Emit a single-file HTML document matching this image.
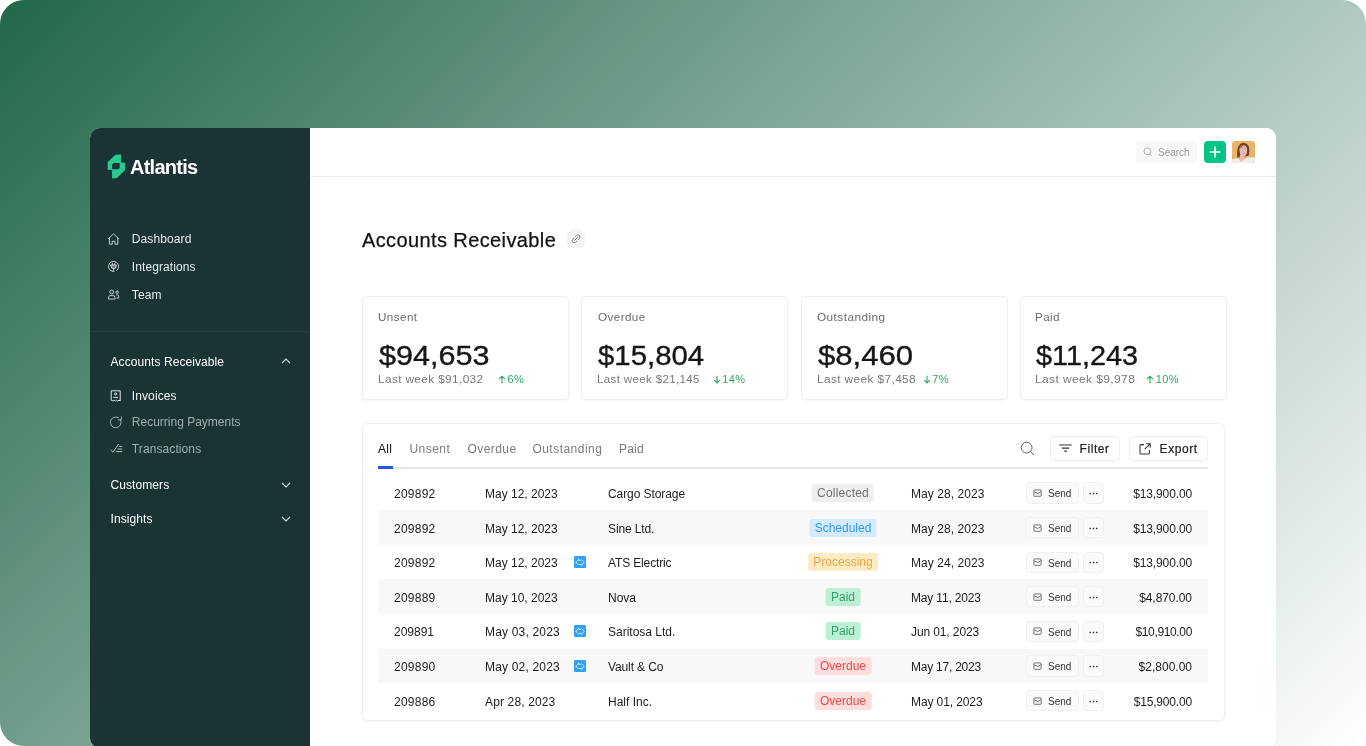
<!DOCTYPE html>
<html lang="en">
<head>
<meta charset="utf-8">
<title>Atlantis – Accounts Receivable</title>
<style>
*{box-sizing:border-box;margin:0;padding:0}
html,body{width:1366px;height:746px;overflow:hidden;background:#fff;font-family:"Liberation Sans",sans-serif;}
.abs{position:absolute}
#stage{position:absolute;left:0;top:0;width:1366px;height:746px;border-radius:24px;overflow:hidden;
  background:linear-gradient(135deg,#22674b 0%,#ffffff 100%);}
#app{will-change:transform;position:absolute;left:90px;top:128px;width:1186px;height:619.6px;border-radius:10px;background:#fff;overflow:hidden}
#side{position:absolute;left:0;top:0;width:220px;height:622px;background:#1a3335;color:#fff}
#side .divider{position:absolute;left:0;top:203px;width:220px;height:1px;background:#27413f}
.nav{position:absolute;left:41.8px;font-size:12px;color:#e6ebeb;white-space:nowrap;line-height:14px;letter-spacing:.1px}
.nav.dim{color:#9fb0b0}
.grp{position:absolute;left:20.5px;font-size:12px;color:#fff;white-space:nowrap;line-height:14px;letter-spacing:.08px;margin-top:.5px}
.ico{position:absolute}
#main{position:absolute;left:220px;top:0;width:966px;height:640px;background:#fff}
#topbar{position:absolute;left:0;top:0;width:966px;height:49px;border-bottom:1px solid #ededed}
#search{position:absolute;left:826px;top:13px;width:61px;height:22px;border-radius:3px;background:#f8f8f8;font-size:10px;color:#9a9a9a;line-height:22px}
#plus{position:absolute;left:894px;top:13px;width:22px;height:22px;border-radius:4px;background:#04c487}
#avatar{position:absolute;left:922px;top:13px;width:23px;height:22px;border-radius:4px;background:#e6a95d;overflow:hidden}
h1{position:absolute;left:52px;top:99.5px;font-size:20px;font-weight:400;color:#111;line-height:24px;white-space:nowrap;letter-spacing:.39px;-webkit-text-stroke:.25px #111}
#link{position:absolute;left:257px;top:102px;width:18px;height:18px;border-radius:5.5px;background:#f4f4f4}
.card{position:absolute;top:168px;width:207px;height:104px;border:1px solid #eeeeee;border-radius:5px;background:#fff;box-shadow:0 1px 2px rgba(0,0,0,.045)}
.card.c4>div{margin-left:-.75px}
.card .lbl{position:absolute;left:15.3px;top:13.1px;font-size:11px;color:#6b6b6b;line-height:14px;letter-spacing:.4px;white-space:nowrap;transform-origin:0 50%;transform:scaleX(1.06)}
.card .big{position:absolute;left:16px;top:42.1px;font-size:28px;color:#161616;line-height:34px;white-space:nowrap;transform-origin:0 50%;transform:scaleX(1.1);-webkit-text-stroke:.35px #161616}
.card .sub{position:absolute;left:15px;top:74.7px;font-size:11px;color:#777;line-height:14px;letter-spacing:.35px;white-space:nowrap;transform-origin:0 50%;transform:scaleX(1.05)}
.card .chg{position:absolute;top:74.7px;font-size:11px;color:#2fa562;line-height:14px;white-space:nowrap;letter-spacing:.4px}
#tblframe{position:absolute;left:52px;top:295px;width:863px;height:298.2px;border:1px solid #efefef;border-radius:5.5px;background:#fff;box-shadow:0 1px 2px rgba(0,0,0,.045)}
#tbl{position:absolute;left:53px;top:297px;width:861px;height:296px}
.tab{position:absolute;top:17px;font-size:12px;line-height:14px;color:#7b7b7b;white-space:nowrap;letter-spacing:.48px}
.tab.on{color:#111}
#tline{position:absolute;left:15px;top:41.6px;width:830px;height:2.2px;background:#e7e7e7}
#tactive{position:absolute;left:15px;top:40.6px;width:15px;height:3.7px;background:#2a54e8}
.btn{position:absolute;top:11.4px;height:24.3px;border:1px solid #ececec;border-radius:4.5px;background:#fff;font-size:12px;line-height:22.3px;color:#222;white-space:nowrap;letter-spacing:.55px;-webkit-text-stroke:.22px #222}
.row{position:absolute;left:15px;width:830px;height:34.62px;font-size:12px;color:#1c1c1c}
.row.alt{background:#f8f8f8}
.row span{position:absolute;top:1.4px;line-height:35px;white-space:nowrap}
.row .id{left:16px}
.row .d1{left:107px}
.row .nm{left:230px}
.row .d2{left:533px}
.row .amt{right:16px;text-align:right}
.row .bdg{top:8.4px;height:18px;line-height:18px;border-radius:3px;font-size:12px;text-align:center;transform:translateX(-50%);left:465px;padding:0 5.3px;letter-spacing:0}
.b-col{background:#efefef;color:#707070}
.b-sch{background:#d5ebfb;color:#2d9cf0}
.b-pro{background:#fdecc3;color:#eba64a}
.b-paid{background:#bdefd7;color:#2fa562}
.b-ovd{background:#fddddd;color:#e84b4b}
.row .send{left:648px;top:6.8px;width:52.6px;height:21.2px;border:1px solid #f0f0f0;background:#fafafa;border-radius:4px;font-size:10px;line-height:19px;color:#333}
.row .more{left:704.8px;top:6.8px;width:21.2px;height:21.2px;border:1px solid #f0f0f0;background:#fafafa;border-radius:4px}
.row .sync{left:196px;top:11.2px;width:12px;height:12px;background:#2fa3f3;border-radius:1.2px}
.row .sync svg{position:absolute;left:0;top:0}
</style>
</head>
<body>
<div id="stage">
 <div id="app">
  <div id="side">
   <svg class="ico" id="logo" style="left:17px;top:25.5px" width="19" height="25" viewBox="0 0 19 25">
    <path fill="#27cb8f" d="M14.1 0.4 L8.3 0.8 L0.65 8.2 L0.65 15.7 L5.1 16.1 L5.1 24.5 L9.9 24.1 L18.1 16.1 L18.1 8.8 L14.1 8.4 Z"/>
    <path fill="#1a3335" d="M5.1 10.5 L6.3 9.1 L12.7 9.1 L12.7 13.7 L11.5 15.3 L5.1 15.3 Z"/>
   </svg>
   <div class="abs" id="brand" style="left:40px;top:27px;font-size:20px;font-weight:700;line-height:24px;letter-spacing:-.75px;color:#fff">Atlantis</div>

   <svg class="ico" style="left:18px;top:104.5px" width="12" height="12" viewBox="0 0 12 12" fill="none" stroke="#dfe6e6" stroke-width=".85" stroke-linejoin="round" stroke-linecap="round"><path d="M0.4 5.8 L5.5 0.8 L10.7 5.8"/><path d="M1.4 5 V11.2 H4.2 V8.3 H7 V11.2 H9.8 V5"/></svg>
   <div class="nav" style="top:104px">Dashboard</div>
   <svg class="ico" style="left:18px;top:133px" width="12" height="12" viewBox="0 0 12 12" fill="none" stroke="#dfe6e6" stroke-width=".85" stroke-linecap="round"><path d="M8.88 9.41 A5.1 5.1 0 1 0 6.04 10.58"/><path d="M3 3.9 H8.2 V5.4 Q8.2 7.6 5.6 7.6 Q3 7.6 3 5.4 Z" fill="#dfe6e6" fill-opacity=".4"/><path d="M4.4 2.3 V3.9 M6.8 2.3 V3.9 M5.6 7.6 V9.6"/></svg>
   <div class="nav" style="top:132px">Integrations</div>
   <svg class="ico" style="left:18px;top:161px" width="12" height="11" viewBox="0 0 12 11" fill="none" stroke="#dfe6e6" stroke-width=".85"><circle cx="3.7" cy="3" r="1.9"/><path d="M0.6 10.1 V8.7 Q0.6 6.4 2.8 6.4 H4.8 Q7 6.4 7 8.7 V10.1 Z"/><circle cx="9.1" cy="3.2" r="1.25"/><path d="M8.2 5.9 H9.5 Q10.7 5.9 10.7 7.4 V9.1 H8.6"/></svg>
   <div class="nav" style="top:160px">Team</div>

   <div class="divider"></div>

   <div class="grp" style="top:226px">Accounts Receivable</div>
   <svg class="ico" style="left:191px;top:230px" width="10" height="6" viewBox="0 0 10 6" fill="none" stroke="#cfd8d8" stroke-width="1.1"><path d="M1 5 L5 1 L9 5"/></svg>

   <svg class="ico" style="left:20px;top:262px" width="12" height="12" viewBox="0 0 12 12" fill="none" stroke="#dfe6e6" stroke-width="1"><path d="M1.2 0.8 H10.2 V11 L9 10.2 L7.8 11 L6.6 10.2 L5.4 11 L4.2 10.2 L3 11 L1.2 10.2 Z"/><circle cx="5.7" cy="4" r="1.1"/><path d="M3.4 7.4 H8"/></svg>
   <div class="nav" style="top:261px;color:#f2f5f5">Invoices</div>
   <svg class="ico" style="left:19px;top:288px" width="14" height="13" viewBox="0 0 14 13" fill="none" stroke="#aebcbc" stroke-width=".95" stroke-linecap="round" stroke-linejoin="round"><path d="M11.7 4.2 A5.4 5.4 0 1 1 9.4 1.62"/><path d="M9.3 3.9 H12.3 V0.9"/></svg>
   <div class="nav dim" style="top:287px;letter-spacing:0">Recurring Payments</div>
   <svg class="ico" style="left:19.5px;top:314.5px" width="13" height="11" viewBox="0 0 13 11" fill="none" stroke="#aebcbc" stroke-width="1"><path d="M0.6 6.9 L3 9.2 L8.6 1 M9.2 3.4 H12.2 M7.6 6 H12.2 M5.8 8.6 H12.2"/></svg>
   <div class="nav dim" style="top:314px">Transactions</div>

   <div class="grp" style="top:349px">Customers</div>
   <svg class="ico" style="left:191px;top:353.5px" width="10" height="6" viewBox="0 0 10 6" fill="none" stroke="#cfd8d8" stroke-width="1.1"><path d="M1 1 L5 5 L9 1"/></svg>
   <div class="grp" style="top:383.4px">Insights</div>
   <svg class="ico" style="left:191px;top:388px" width="10" height="6" viewBox="0 0 10 6" fill="none" stroke="#cfd8d8" stroke-width="1.1"><path d="M1 1 L5 5 L9 1"/></svg>
  </div>
  <div id="main">
   <div id="topbar">
    <div id="search"><svg class="abs" style="left:7px;top:6px" width="10" height="10" viewBox="0 0 10 10" fill="none" stroke="#b5b5b5" stroke-width="1"><circle cx="4.4" cy="4.4" r="3.4"/><path d="M7 7 L8.8 8.8"/></svg><span class="abs" style="left:22px;top:.6px">Search</span></div>
    <div id="plus"><svg class="abs" style="left:5px;top:5px" width="12" height="12" viewBox="0 0 12 12" stroke="#fff" stroke-width="1.6" fill="none"><path d="M6 0.5 V11.5 M0.5 6 H11.5"/></svg></div>
    <div id="avatar"><svg width="23" height="22" viewBox="0 0 23 22">
      <rect width="23" height="22" fill="#e9b368"/>
      <path d="M5.3 16.2 Q4.8 10 5.8 6.6 Q7.4 1.8 11.6 1.9 Q15.8 2 17 6.2 Q17.8 9.6 16.8 14.4 L13.4 15.6 L7.6 16.6 Z" fill="#6a4327"/>
      <path d="M7.4 9.6 Q7.2 4.6 11 4.3 Q15 4.1 15.2 8.8 Q15.3 12.6 13.6 14.6 Q11.6 16.4 9.6 15 Q7.6 13.2 7.4 9.6 Z" fill="#f3b7b0"/>
      <path d="M8 13.4 L12.4 15 L12.2 18.6 L10.4 21 L7.2 20.6 Z" fill="#f3b7b0"/>
      <path d="M7.6 7.6 Q8.6 4.6 11.4 4.3 Q10.4 6 7.6 7.6Z" fill="#6a4327"/>
      <circle cx="10.1" cy="7.3" r=".55" fill="#73808f"/><circle cx="13.1" cy="7.4" r=".55" fill="#73808f"/>
      <ellipse cx="12" cy="12.1" rx="1.1" ry=".55" fill="#8f9eae"/>
      <path d="M10.4 10 L11.2 9.4 L11.6 10.4Z" fill="#e59a86"/>
      <path d="M0 22.3 V18.4 Q3.6 17.2 7 17.8 L8.4 20.8 L12.2 18.8 L14.4 16.8 Q18.6 15.8 23 16.4 V22.3 Z" fill="#eef0ef"/>
    </svg></div>
   </div>
   <h1>Accounts Receivable</h1>
   <div id="link"><svg class="abs" style="left:0;top:0" width="18" height="18" viewBox="0 0 18 18" fill="none" stroke="#767676" stroke-width=".85" stroke-linecap="round"><g transform="translate(9.1 8.9) rotate(-45)"><path d="M-1 -2 H-2.7 A2 2 0 0 0 -2.7 2 H-1"/><path d="M1 -2 H2.7 A2 2 0 0 1 2.7 2 H1"/><path d="M-1.9 0 H1.9"/></g></svg></div>
   <div class="card" style="left:52px">
    <div class="lbl" style="transform:scaleX(1.06)">Unsent</div>
    <div class="big" style="transform:scaleX(1.092)">$94,653</div>
    <div class="sub" style="transform:scaleX(1.0727)">Last week $91,032</div>
    <div class="chg" style="left:135.2px"><svg class="abs" style="left:0;top:3px" width="8" height="9" viewBox="0 0 8 9" fill="none" stroke="#2fa562" stroke-width="1.1"><path d="M4 8.5 V1.2 M1.2 4 L4 1.2 L6.8 4"/></svg><span style="margin-left:9.4px">6%</span></div>
   </div>
   <div class="card" style="left:271.25px">
    <div class="lbl" style="transform:scaleX(1.06)">Overdue</div>
    <div class="big" style="transform:scaleX(1.049)">$15,804</div>
    <div class="sub" style="transform:scaleX(1.046)">Last week $21,145</div>
    <div class="chg" style="left:130.55px"><svg class="abs" style="left:0;top:3px" width="8" height="9" viewBox="0 0 8 9" fill="none" stroke="#2fa562" stroke-width="1.1"><path d="M4 0.8 V8 M1.2 5.2 L4 8 L6.8 5.2"/></svg><span style="margin-left:9.4px">14%</span></div>
   </div>
   <div class="card" style="left:490.5px">
    <div class="lbl" style="transform:scaleX(1.074)">Outstanding</div>
    <div class="big" style="transform:scaleX(1.111)">$8,460</div>
    <div class="sub" style="transform:scaleX(1.079)">Last week $7,458</div>
    <div class="chg" style="left:121.25px"><svg class="abs" style="left:0;top:3px" width="8" height="9" viewBox="0 0 8 9" fill="none" stroke="#2fa562" stroke-width="1.1"><path d="M4 0.8 V8 M1.2 5.2 L4 8 L6.8 5.2"/></svg><span style="margin-left:9.4px">7%</span></div>
   </div>
   <div class="card c4" style="left:709.75px">
    <div class="lbl" style="transform:scaleX(1.06)">Paid</div>
    <div class="big" style="transform:scaleX(1.029)">$11,243</div>
    <div class="sub" style="transform:scaleX(1.091)">Last week $9,978</div>
    <div class="chg" style="left:126.45px"><svg class="abs" style="left:0;top:3px" width="8" height="9" viewBox="0 0 8 9" fill="none" stroke="#2fa562" stroke-width="1.1"><path d="M4 8.5 V1.2 M1.2 4 L4 1.2 L6.8 4"/></svg><span style="margin-left:9.4px">10%</span></div>
   </div>
   <div id="tblframe"></div>
   <div id="tbl">
    <div class="tab on" style="left:15px;letter-spacing:.3px">All</div>
    <div class="tab" style="left:46.4px">Unsent</div>
    <div class="tab" style="left:104.6px;letter-spacing:.42px">Overdue</div>
    <div class="tab" style="left:169.4px">Outstanding</div>
    <div class="tab" style="left:256px;letter-spacing:.2px">Paid</div>
    <svg class="abs" style="left:656.6px;top:15.8px" width="15" height="15" viewBox="0 0 15 15" fill="none" stroke="#5e5e5e" stroke-width="1"><circle cx="6.6" cy="6.6" r="5.4"/><path d="M10.6 10.6 L14 14"/></svg>
    <div class="btn" style="left:687px;width:70.3px"><svg class="abs" style="left:8px;top:6.9px" width="13" height="9" viewBox="0 0 13 9" fill="none" stroke="#333" stroke-width="1.05"><path d="M0.2 1 H12.8 M2.8 4.1 H10.2 M5.2 7.1 H7.9"/></svg><span class="abs" style="left:28.6px;top:.8px">Filter</span></div>
    <div class="btn" style="left:766.3px;width:78.7px"><svg class="abs" style="left:8.6px;top:5.6px" width="12" height="12" viewBox="0 0 12 12" fill="none" stroke="#333" stroke-width="1.05"><path d="M5 1.6 H2 Q1 1.6 1 2.6 V10 Q1 11 2 11 H9.4 Q10.4 11 10.4 10 V7"/><path d="M7.2 0.8 H11.2 V4.8 M11.2 0.8 L5.8 6.2"/></svg><span class="abs" style="left:29.3px;top:.8px">Export</span></div>
    <div id="tline"></div><div id="tactive"></div>
    <div class="row" style="top:50.60px"><span class="id" style="letter-spacing:0.24px">209892</span><span class="d1">May 12, 2023</span><span class="nm" style="letter-spacing:-0.08px">Cargo Storage</span><span class="bdg b-col" style="letter-spacing:.2px">Collected</span><span class="d2" style="letter-spacing:0.07px">May 28, 2023</span><span class="send"><svg class="abs" style="left:6px;top:5.6px" width="10" height="9" viewBox="0 0 10 9" fill="none" stroke="#555" stroke-width="0.8"><rect x="0.9" y="0.9" width="7.2" height="6.4" rx="0.7"/><path d="M1.1 2.7 L4.5 4.5 L7.9 2.7"/></svg><span class="abs" style="left:21px;top:1px;line-height:19px">Send</span></span><span class="more"><svg class="abs" style="left:5px;top:8.7px" width="9" height="3" viewBox="0 0 9 3" fill="#444"><rect x=".4" y=".7" width="1.6" height="1.6" rx=".4"/><rect x="3.7" y=".7" width="1.6" height="1.6" rx=".4"/><rect x="7" y=".7" width="1.6" height="1.6" rx=".4"/></svg></span><span class="amt" style="letter-spacing:-0.13px">$13,900.00</span></div>
    <div class="row alt" style="top:85.22px"><span class="id" style="letter-spacing:0.24px">209892</span><span class="d1">May 12, 2023</span><span class="nm" style="letter-spacing:-0.12px">Sine Ltd.</span><span class="bdg b-sch">Scheduled</span><span class="d2" style="letter-spacing:0.07px">May 28, 2023</span><span class="send"><svg class="abs" style="left:6px;top:5.6px" width="10" height="9" viewBox="0 0 10 9" fill="none" stroke="#555" stroke-width="0.8"><rect x="0.9" y="0.9" width="7.2" height="6.4" rx="0.7"/><path d="M1.1 2.7 L4.5 4.5 L7.9 2.7"/></svg><span class="abs" style="left:21px;top:1px;line-height:19px">Send</span></span><span class="more"><svg class="abs" style="left:5px;top:8.7px" width="9" height="3" viewBox="0 0 9 3" fill="#444"><rect x=".4" y=".7" width="1.6" height="1.6" rx=".4"/><rect x="3.7" y=".7" width="1.6" height="1.6" rx=".4"/><rect x="7" y=".7" width="1.6" height="1.6" rx=".4"/></svg></span><span class="amt" style="letter-spacing:-0.13px">$13,900.00</span></div>
    <div class="row" style="top:119.84px"><span class="id" style="letter-spacing:0.24px">209892</span><span class="d1">May 12, 2023</span><span class="sync"><svg width="12" height="12" viewBox="0 0 12 12" fill="none" stroke="#d9eefd" stroke-width="0.75" stroke-linecap="round" stroke-linejoin="round"><path d="M2.1 6.3 Q2.6 4.2 4.5 4.1 H7.7 Q9.6 4.4 10 6.3 Q9.6 8.4 7.7 8.6 H4.5 Q2.5 8.4 2.1 6.3Z"/><path d="M4.4 3 L4.5 4.1 L5.6 4.5 M7.9 9.6 L7.7 8.6 L6.6 8.2"/></svg></span><span class="nm" style="letter-spacing:-0.14px">ATS Electric</span><span class="bdg b-pro">Processing</span><span class="d2" style="letter-spacing:0.07px">May 24, 2023</span><span class="send"><svg class="abs" style="left:6px;top:5.6px" width="10" height="9" viewBox="0 0 10 9" fill="none" stroke="#555" stroke-width="0.8"><rect x="0.9" y="0.9" width="7.2" height="6.4" rx="0.7"/><path d="M1.1 2.7 L4.5 4.5 L7.9 2.7"/></svg><span class="abs" style="left:21px;top:1px;line-height:19px">Send</span></span><span class="more"><svg class="abs" style="left:5px;top:8.7px" width="9" height="3" viewBox="0 0 9 3" fill="#444"><rect x=".4" y=".7" width="1.6" height="1.6" rx=".4"/><rect x="3.7" y=".7" width="1.6" height="1.6" rx=".4"/><rect x="7" y=".7" width="1.6" height="1.6" rx=".4"/></svg></span><span class="amt" style="letter-spacing:-0.13px">$13,900.00</span></div>
    <div class="row alt" style="top:154.46px"><span class="id" style="letter-spacing:0.24px">209889</span><span class="d1">May 10, 2023</span><span class="nm">Nova</span><span class="bdg b-paid">Paid</span><span class="d2" style="letter-spacing:-0.17px">May 11, 2023</span><span class="send"><svg class="abs" style="left:6px;top:5.6px" width="10" height="9" viewBox="0 0 10 9" fill="none" stroke="#555" stroke-width="0.8"><rect x="0.9" y="0.9" width="7.2" height="6.4" rx="0.7"/><path d="M1.1 2.7 L4.5 4.5 L7.9 2.7"/></svg><span class="abs" style="left:21px;top:1px;line-height:19px">Send</span></span><span class="more"><svg class="abs" style="left:5px;top:8.7px" width="9" height="3" viewBox="0 0 9 3" fill="#444"><rect x=".4" y=".7" width="1.6" height="1.6" rx=".4"/><rect x="3.7" y=".7" width="1.6" height="1.6" rx=".4"/><rect x="7" y=".7" width="1.6" height="1.6" rx=".4"/></svg></span><span class="amt" style="letter-spacing:-0.06px">$4,870.00</span></div>
    <div class="row" style="top:189.08px"><span class="id">209891</span><span class="d1" style="letter-spacing:0.18px">May 03, 2023</span><span class="sync"><svg width="12" height="12" viewBox="0 0 12 12" fill="none" stroke="#d9eefd" stroke-width="0.75" stroke-linecap="round" stroke-linejoin="round"><path d="M2.1 6.3 Q2.6 4.2 4.5 4.1 H7.7 Q9.6 4.4 10 6.3 Q9.6 8.4 7.7 8.6 H4.5 Q2.5 8.4 2.1 6.3Z"/><path d="M4.4 3 L4.5 4.1 L5.6 4.5 M7.9 9.6 L7.7 8.6 L6.6 8.2"/></svg></span><span class="nm">Saritosa Ltd.</span><span class="bdg b-paid">Paid</span><span class="d2" style="letter-spacing:-0.11px">Jun 01, 2023</span><span class="send"><svg class="abs" style="left:6px;top:5.6px" width="10" height="9" viewBox="0 0 10 9" fill="none" stroke="#555" stroke-width="0.8"><rect x="0.9" y="0.9" width="7.2" height="6.4" rx="0.7"/><path d="M1.1 2.7 L4.5 4.5 L7.9 2.7"/></svg><span class="abs" style="left:21px;top:1px;line-height:19px">Send</span></span><span class="more"><svg class="abs" style="left:5px;top:8.7px" width="9" height="3" viewBox="0 0 9 3" fill="#444"><rect x=".4" y=".7" width="1.6" height="1.6" rx=".4"/><rect x="3.7" y=".7" width="1.6" height="1.6" rx=".4"/><rect x="7" y=".7" width="1.6" height="1.6" rx=".4"/></svg></span><span class="amt" style="letter-spacing:-0.35px">$10,910.00</span></div>
    <div class="row alt" style="top:223.70px"><span class="id" style="letter-spacing:0.24px">209890</span><span class="d1" style="letter-spacing:0.18px">May 02, 2023</span><span class="sync"><svg width="12" height="12" viewBox="0 0 12 12" fill="none" stroke="#d9eefd" stroke-width="0.75" stroke-linecap="round" stroke-linejoin="round"><path d="M2.1 6.3 Q2.6 4.2 4.5 4.1 H7.7 Q9.6 4.4 10 6.3 Q9.6 8.4 7.7 8.6 H4.5 Q2.5 8.4 2.1 6.3Z"/><path d="M4.4 3 L4.5 4.1 L5.6 4.5 M7.9 9.6 L7.7 8.6 L6.6 8.2"/></svg></span><span class="nm" style="letter-spacing:-0.12px">Vault &amp; Co</span><span class="bdg b-ovd">Overdue</span><span class="d2" style="letter-spacing:-0.23px">May 17, 2023</span><span class="send"><svg class="abs" style="left:6px;top:5.6px" width="10" height="9" viewBox="0 0 10 9" fill="none" stroke="#555" stroke-width="0.8"><rect x="0.9" y="0.9" width="7.2" height="6.4" rx="0.7"/><path d="M1.1 2.7 L4.5 4.5 L7.9 2.7"/></svg><span class="abs" style="left:21px;top:1px;line-height:19px">Send</span></span><span class="more"><svg class="abs" style="left:5px;top:8.7px" width="9" height="3" viewBox="0 0 9 3" fill="#444"><rect x=".4" y=".7" width="1.6" height="1.6" rx=".4"/><rect x="3.7" y=".7" width="1.6" height="1.6" rx=".4"/><rect x="7" y=".7" width="1.6" height="1.6" rx=".4"/></svg></span><span class="amt">$2,800.00</span></div>
    <div class="row" style="top:258.32px"><span class="id" style="letter-spacing:0.24px">209886</span><span class="d1" style="letter-spacing:.14px">Apr 28, 2023</span><span class="nm">Half Inc.</span><span class="bdg b-ovd">Overdue</span><span class="d2" style="letter-spacing:-0.1px">May 01, 2023</span><span class="send"><svg class="abs" style="left:6px;top:5.6px" width="10" height="9" viewBox="0 0 10 9" fill="none" stroke="#555" stroke-width="0.8"><rect x="0.9" y="0.9" width="7.2" height="6.4" rx="0.7"/><path d="M1.1 2.7 L4.5 4.5 L7.9 2.7"/></svg><span class="abs" style="left:21px;top:1px;line-height:19px">Send</span></span><span class="more"><svg class="abs" style="left:5px;top:8.7px" width="9" height="3" viewBox="0 0 9 3" fill="#444"><rect x=".4" y=".7" width="1.6" height="1.6" rx=".4"/><rect x="3.7" y=".7" width="1.6" height="1.6" rx=".4"/><rect x="7" y=".7" width="1.6" height="1.6" rx=".4"/></svg></span><span class="amt" style="letter-spacing:-0.17px">$15,900.00</span></div>
   </div>
  </div>
 </div>
</div>
</body>
</html>
